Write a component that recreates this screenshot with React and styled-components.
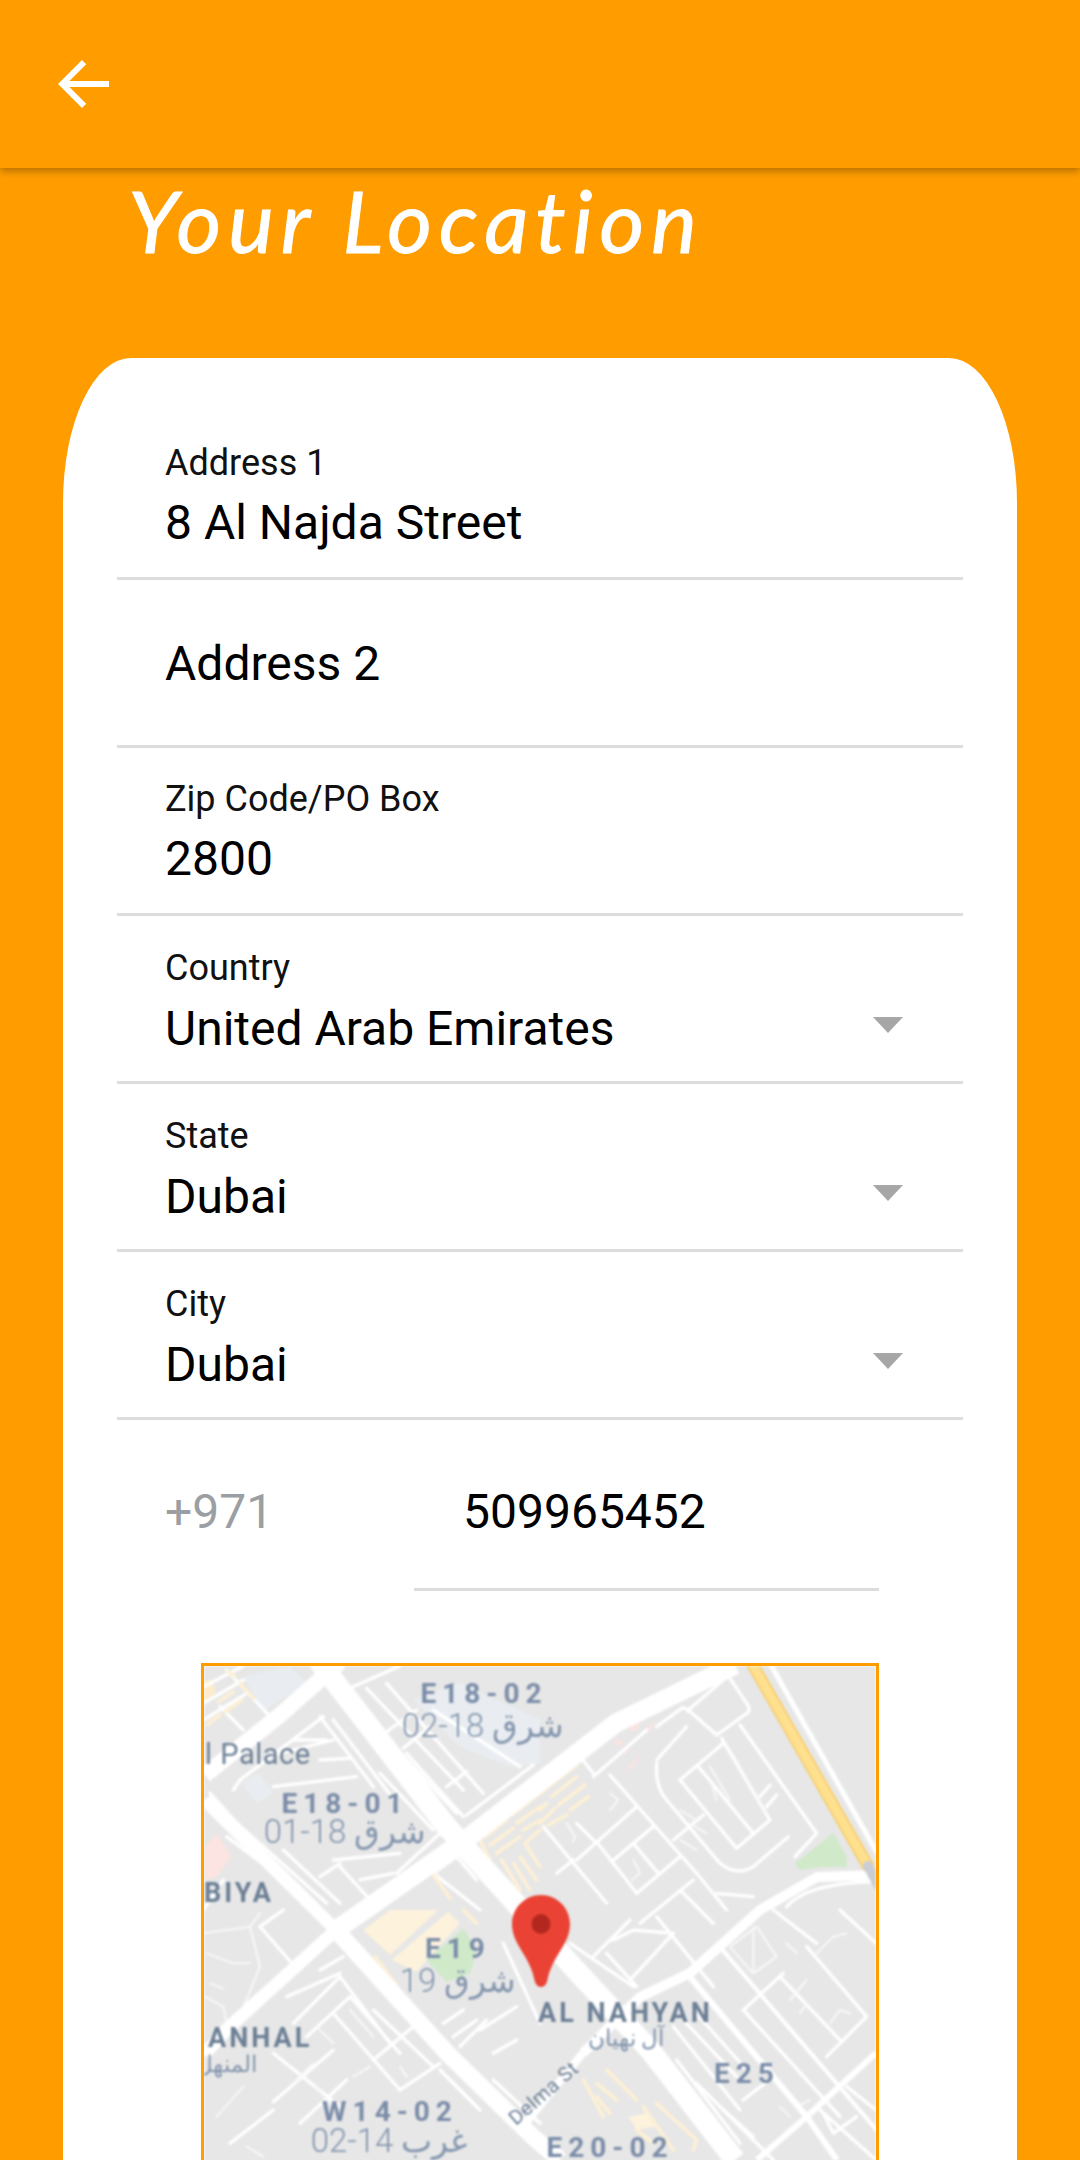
import styled, { createGlobalStyle } from 'styled-components';

const GlobalStyle = createGlobalStyle`
  html, body { margin: 0; padding: 0; background: #ff9d00; }
  body { font-family: Roboto, "Noto Sans", sans-serif; }
`;

const Page = styled.div`
  width: 1080px;
  height: 2160px;
  overflow: hidden;
  background: #ff9d00;
`;

const AppBar = styled.header`
  position: relative;
  z-index: 1;
  height: 168px;
  display: flex;
  align-items: center;
  padding-left: 46px;
  background: #ff9d00;
  box-shadow: 0 3px 8px rgba(0, 0, 0, 0.3);
`;

const BackIcon = styled.svg`
  width: 72px;
  height: 72px;
  fill: #fff;
  overflow: visible;
`;

// the handwriting face of the reference isn't installed, Lato italic is nearest
const Title = styled.h1`
  height: 190px;
  margin: 0;
  padding: 2px 0 0 128px;
  box-sizing: border-box;
  color: #fff;
  font-family: Lato, sans-serif;
  font-style: italic;
  font-size: 86px;
  font-weight: 400;
  line-height: 100px;
  letter-spacing: 7px;
  -webkit-text-stroke: 1px #fff;
`;

const Card = styled.main`
  margin: 0 63px;
  padding: 54px 54px 0;
  height: 1802px;
  box-sizing: border-box;
  background: #fff;
  border-radius: 68px 68px 0 0 / 145px 145px 0 0;
`;

const Field = styled.div`
  position: relative;
  height: 168px;
  box-sizing: border-box;
  padding: ${(p) => (p.$empty ? '56px' : '30px')} 48px 0;
  border-bottom: 3px solid #dcdcdc;
`;

const Label = styled.div`
  margin-top: ${(p) => (p.$select ? '1px' : '0')};
  font-size: 36px;
  line-height: 42px;
  color: #111;
`;

const Value = styled.div`
  margin-top: ${(p) => (p.$empty ? '0' : p.$select ? '12px' : '11px')};
  font-size: 48px;
  line-height: 56px;
  color: #000;
`;

const Caret = styled.span`
  position: absolute;
  right: 60px;
  top: 101px;
  width: 0;
  height: 0;
  border-left: 15px solid transparent;
  border-right: 15px solid transparent;
  border-top: 16px solid #a6a6a6;
`;

const PhoneRow = styled.div`
  display: flex;
  height: 171px;
`;

const PhoneCode = styled.div`
  width: 297px;
  box-sizing: border-box;
  padding: 64px 0 0 48px;
  font-size: 48px;
  line-height: 56px;
  color: #9b9ea3;
`;

const PhoneInput = styled.div`
  width: 465px;
  box-sizing: border-box;
  padding: 64px 0 0 49px;
  font-size: 48px;
  line-height: 56px;
  color: #000;
  border-bottom: 3px solid #dcdcdc;
`;

const MapFrame = styled.div`
  width: 678px;
  height: 520px;
  margin: 72px 0 0 84px;
  box-sizing: border-box;
  border: 3px solid #ff9d00;
  overflow: hidden;
`;

const MapSvg = styled.svg`
  display: block;
  width: 672px;
  height: 514px;
  filter: blur(0.8px);
`;

const Street = styled.path`
  fill: none;
  stroke: ${(p) => p.$color || '#fff'};
  stroke-width: ${(p) => p.$w || 9}px;
  stroke-linecap: round;
  stroke-linejoin: round;
`;

const Road = styled.path`
  fill: none;
  stroke: #fff;
  stroke-width: ${(p) => p.$w}px;
  stroke-linejoin: round;
`;

const Area = styled.path`
  fill: ${(p) => p.$color};
`;

const MapCode = styled.text`
  font-family: Roboto, sans-serif;
  font-size: 28px;
  font-weight: 700;
  letter-spacing: 6px;
  fill: #7a8ca8;
  text-anchor: middle;
`;

const MapName = styled.text`
  font-family: Roboto, sans-serif;
  font-size: ${(p) => p.$size || 27}px;
  font-weight: ${(p) => p.$weight || 700};
  letter-spacing: ${(p) => p.$spacing || 3}px;
  fill: #6c7f95;
`;

const MapArabic = styled.text`
  font-family: Roboto, "DejaVu Sans", sans-serif;
  font-size: ${(p) => p.$size || 33}px;
  font-weight: 300;
  fill: #8496ae;
  direction: rtl;
  text-anchor: middle;
`;

const fields = [
  { label: 'Address 1', value: '8 Al Najda Street' },
  { value: 'Address 2', empty: true },
  { label: 'Zip Code/PO Box', value: '2800' },
  { label: 'Country', value: 'United Arab Emirates', select: true },
  { label: 'State', value: 'Dubai', select: true },
  { label: 'City', value: 'Dubai', select: true },
];

// street lines, in the coords of each quarter of the map at 3x
const quarters = [
  {
    at: 'translate(200 1660) scale(0.3333)',
    areas: [
      ['M130 50 L270 20 L320 70 L190 150 Z', '#e9edf1'],
      ['M125 370 L175 340 L220 400 L170 430 Z', '#e9edf1'],
      ['M15 560 L50 520 L95 590 L50 650 L15 660 Z', '#fbe4e2'],
      ['M10 60 L40 60 L45 100 L10 125 Z', '#fdeccc'],
      ['M640 120 L780 70 L1020 180 L1020 310 L930 320 L780 260 Z', '#e9edf1'],
    ],
    cream: ['M55 125 L100 95', 'M75 155 L125 120', 'M20 195 L60 165', 'M120 70 L160 115', 'M85 35 L105 50', 'M855 530 L920 480', 'M870 555 L940 505', 'M890 580 L960 530', 'M935 465 L1020 400', 'M950 490 L1020 440', 'M970 510 L1020 480', 'M905 600 L960 690', 'M940 610 L990 690', 'M960 590 L1010 660', 'M1020 510 L975 550 L1020 620', 'M835 530 L870 600', 'M690 630 L750 715'],
    lines: ['M415 100 L600 18', 'M445 110 L770 460', 'M500 85 L790 390', 'M560 70 L850 400', 'M610 265 L690 200', 'M740 380 L800 335', 'M800 465 L1000 315', 'M620 280 L790 470', 'M540 230 L650 150', 'M700 150 L960 320', 'M120 360 L370 170', 'M120 360 L100 390', 'M220 380 L470 350', 'M280 240 L380 240', 'M200 290 L400 240', 'M360 300 L450 295', 'M360 170 L520 380', 'M400 180 L590 430', 'M540 340 L700 510', 'M720 520 L590 640', 'M100 480 L380 730', 'M30 400 L300 700', 'M80 530 L200 620', 'M250 570 L420 730', 'M360 650 L420 610', 'M420 620 L510 720', 'M480 660 L580 640', 'M400 600 L600 580', 'M10 80 L130 18', 'M80 30 L220 180', 'M10 130 L130 60', 'M10 180 L140 100', 'M60 140 L130 210', 'M700 640 L770 590 L830 660', 'M700 640 L840 750', 'M10 750 L70 660'],
  },
  {
    at: 'translate(540 1660) scale(0.3333)',
    areas: [
      ['M255 190 L305 165 L295 205 L275 215 Z', '#fbe4e2'],
      ['M315 210 L345 180 L332 215 Z', '#fbe4e2'],
      ['M218 230 L250 245 L235 265 Z', '#fbe4e2'],
      ['M235 290 L270 255 L262 275 Z', '#fbe4e2'],
      ['M250 335 L310 275 L280 320 Z', '#fbe4e2'],
      ['M765 610 L880 520 L920 590 L920 620 Q820 620 780 630 Z', '#cfe9c9'],
    ],
    cream: ['M0 400 L110 315', 'M35 410 L110 350', 'M55 435 L135 375', 'M90 450 L145 410', 'M0 450 L20 430', 'M0 490 L45 445', 'M25 495 L80 465'],
    lines: ['M445 150 L550 60', 'M445 150 L530 225 L620 160 Q635 150 620 130 L560 40', 'M350 200 L425 145 Q435 140 445 155', 'M350 300 L440 200', 'M350 310 Q345 380 380 420 L540 610 Q590 650 640 620 L745 530', 'M420 360 L550 250', 'M420 360 L590 565 L690 480 L545 235', 'M600 195 L830 520 L765 590', 'M475 320 L640 520', 'M400 540 L490 465', 'M660 410 L690 375', 'M680 440 L710 405', 'M120 290 L160 340', 'M160 350 L320 210', 'M210 345 L470 640 L560 750', 'M290 440 L110 600', 'M340 500 L215 605', 'M420 590 L290 700', 'M170 545 L290 700', 'M10 500 L200 730', 'M100 600 L50 640', 'M165 545 L110 490', 'M280 550 L355 640', 'M460 660 L300 790', 'M420 690 L520 790', 'M530 700 L640 710', 'M740 740 Q800 670 1000 665'],
    thin: ['M510 320 L570 420', 'M515 370 L530 420', 'M580 285 L680 460', 'M420 450 L470 480', 'M450 490 L500 520', 'M420 540 L470 570', 'M210 400 L235 420 L210 450', 'M80 490 L105 530 L100 545', 'M280 600 L300 640 L275 660'],
  },
  {
    at: 'translate(200 1910) scale(0.3333)',
    areas: [
      ['M490 60 L570 0 L715 0 L570 135 Z', '#fdf2dc'],
      ['M575 150 L745 5 L780 40 L680 150 L650 185 Z', '#fdf2dc'],
      ['M680 150 L790 55 L830 120 L810 190 L740 215 Z', '#cfe9c9'],
    ],
    cream: ['M525 140 L590 225', 'M790 0 L830 40'],
    lines: ['M180 50 L280 165', 'M180 50 L250 0', 'M360 180 L430 140', 'M260 260 L420 190', 'M420 200 L570 400', 'M280 340 L420 200', 'M320 380 L450 260 L600 430', 'M400 310 L600 540', 'M520 450 L640 350', 'M600 540 L720 460', 'M520 300 L700 470', 'M220 430 L420 590', 'M220 575 L400 420', 'M300 640 L440 510', 'M90 700 L220 600', 'M630 320 L780 480', 'M720 480 L840 600', 'M780 410 L860 330', 'M840 360 L950 290', 'M880 430 L950 390', 'M880 510 L1020 640', 'M730 340 L790 300', 'M760 380 L830 330', 'M740 500 L830 590', 'M910 100 L1020 340'],
    thin: ['M10 70 L150 50 L180 10', 'M150 50 L180 170 L110 340', 'M20 130 L100 160 L150 160', 'M30 220 L70 235', 'M140 280 L180 245', 'M15 260 L70 290 L80 340', 'M350 350 L400 400', 'M450 300 L520 380', 'M280 520 L340 460', 'M340 520 L400 590', 'M50 620 L130 530', 'M140 710 L190 740', 'M600 470 L620 500', 'M460 500 L510 470'],
  },
  {
    at: 'translate(540 1910) scale(0.3333)',
    areas: [['M265 620 L320 610 L345 650 L290 660 Z', '#fdf2dc']],
    cream: ['M310 590 L400 720', 'M350 580 L470 690 L460 720', 'M290 660 L340 700', 'M130 510 L190 620', 'M200 480 L290 570', 'M170 520 L230 570', 'M170 560 L210 610'],
    lines: ['M90 100 L280 230', 'M200 130 L290 230', 'M220 90 L280 60 L400 70', 'M270 210 L400 70', 'M350 20 L520 230', 'M160 140 L270 30', 'M610 300 L730 190', 'M610 300 L900 620', 'M720 200 L900 390', 'M860 440 L980 320 L800 110', 'M1008 100 L900 0', 'M700 0 L830 100', 'M850 610 L880 670 L950 620', 'M840 600 L1008 750', 'M920 530 L1008 600', 'M400 350 L600 600', 'M430 330 L590 500', 'M460 300 L620 480', 'M410 450 L600 700', 'M610 570 L700 500', 'M470 520 L700 750', 'M540 590 L640 680'],
    thin: ['M750 270 L800 210', 'M780 310 L800 280', 'M870 340 L900 300 L930 310', 'M570 110 L640 190 L710 140', 'M570 110 L650 50 L710 140', 'M640 50 L640 190', 'M740 100 L770 130', 'M830 130 L880 80 L920 70', 'M720 590 L750 620', 'M770 590 L810 570'],
  },
];

const mainRoads = [
  ['M318 1660 L447 1827 L573 1967 L650 2050 L735 2160', 21],
  ['M735 1665 L616 1723 L465 1840 L336 1930', 19],
  ['M336 1930 L226 2030 L204 2055', 13],
  ['M205 1800 L336 1930', 13],
  ['M336 1930 L447 2053 L533 2137 L560 2160', 17],
  ['M880 1875 L817 1877 L760 1910 L690 1973 L640 1997 L583 2053', 10],
  ['M583 2053 L520 2130', 8],
  ['M205 1775 L280 1715 L340 1662', 16],
  ['M768 1660 L880 1858', 5],
  ['M876 2053 L803 2120 L757 2160', 6],
  ['M690 1977 L807 2117 L837 2160', 6],
  ['M720 1947 L880 2134', 4],
];

function LocationMap() {
  return (
    <MapSvg viewBox="204 1666 672 514">
      <rect x="204" y="1666" width="672" height="514" fill="#e7e7e7" />
      {quarters.map((q) => (
        <g key={q.at} transform={q.at}>
          {q.areas.map(([d, color]) => <Area key={d} d={d} $color={color} />)}
          {q.lines.map((d) => <Street key={d} d={d} $w={10} />)}
          {(q.thin || []).map((d) => <Street key={d} d={d} $w={6} $color="#f8f8f8" />)}
          {q.cream.map((d) => <Street key={d} d={d} $w={11} $color="#fdf0d5" />)}
        </g>
      ))}
      {mainRoads.map(([d, w]) => <Road key={d} d={d} $w={w} />)}
      <Street d="M750 1660 L868 1866" $w={12} $color="#f7cb62" />
      <Street d="M750 1660 L868 1866" $w={9} $color="#fee08f" />
      <Street d="M868 1866 L880 1888" $w={10} $color="#c9ced6" />

      <MapCode x="484" y="1703">E18-02</MapCode>
      <MapArabic x="483" y="1737">شرق 18-02</MapArabic>
      <MapName x="205" y="1764" $size={29} $weight={400} $spacing={0.5}>l Palace</MapName>
      <MapCode x="345" y="1813">E18-01</MapCode>
      <MapArabic x="345" y="1843">شرق 18-01</MapArabic>
      <MapName x="204" y="1902">BIYA</MapName>
      <MapCode x="458" y="1958">E19</MapCode>
      <MapArabic x="458" y="1992">شرق 19</MapArabic>
      <MapName x="538" y="2022">AL NAHYAN</MapName>
      <MapArabic x="626" y="2046" $size={23}>آل نهيان</MapArabic>
      <MapCode x="747" y="2083">E25</MapCode>
      <MapName x="208" y="2047">ANHAL</MapName>
      <MapArabic x="226" y="2072" $size={23}>المنهل</MapArabic>
      <MapCode x="390" y="2121">W14-02</MapCode>
      <MapArabic x="389" y="2152">غرب 14-02</MapArabic>
      <MapCode x="610" y="2157">E20-02</MapCode>
      <MapName transform="translate(516 2126) rotate(-41)" $size={20} $weight={400} $spacing={0.5}>Delma St</MapName>

      <path
        d="M541 1895 C557 1895 570 1908 570 1924 C570 1945 552 1955 547 1982 Q545 1987 541 1987 Q537 1987 535 1982 C530 1955 512 1945 512 1924 C512 1908 525 1895 541 1895 Z"
        fill="#ea4335"
      />
      <ellipse cx="541" cy="1924" rx="9.5" ry="10" fill="#b3281e" />
    </MapSvg>
  );
}

export default function App() {
  return (
    <Page>
      <GlobalStyle />
      <AppBar>
        <BackIcon viewBox="0 0 24 24">
          <path d="M21 11H7.83l5.59-5.59L12 4l-8 8 8 8 1.41-1.41L7.83 13H21v-2z" />
        </BackIcon>
      </AppBar>
      <Title>Your Location</Title>
      <Card>
        {fields.map((f) => (
          <Field key={f.value + f.label} $empty={f.empty}>
            {f.label && <Label $select={f.select}>{f.label}</Label>}
            <Value $empty={f.empty} $select={f.select}>{f.value}</Value>
            {f.select && <Caret />}
          </Field>
        ))}
        <PhoneRow>
          <PhoneCode>+971</PhoneCode>
          <PhoneInput>509965452</PhoneInput>
        </PhoneRow>
        <MapFrame>
          <LocationMap />
        </MapFrame>
      </Card>
    </Page>
  );
}
